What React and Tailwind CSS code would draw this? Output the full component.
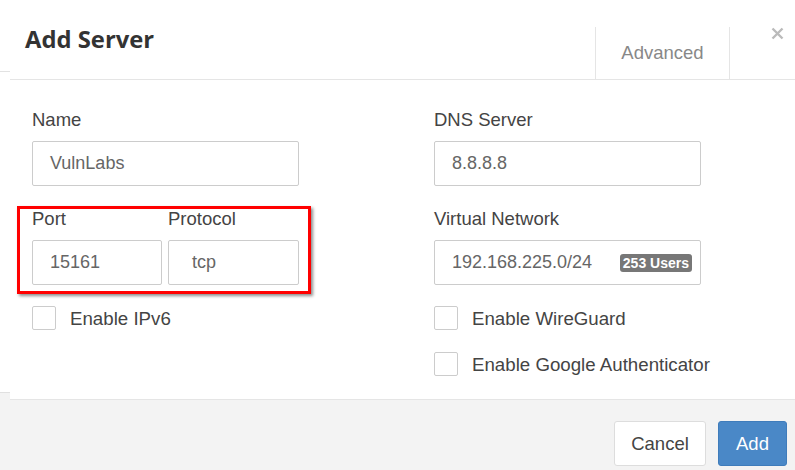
import React from 'react';

const sans = { fontFamily: '"Liberation Sans", Arial, sans-serif' };

function Field({ label, value, width = 'w-[267px]', pad = 'pl-[17px]', badge }) {
    return (
        <div className="flex flex-col">
            <label className="text-[18.5px] leading-[22px] text-[#444] mb-[10px] whitespace-nowrap">{label}</label>
            <div className={`${width} ${pad} h-[45px] border border-[#ccc] rounded-[2px] bg-white flex items-center pr-[8px]`}>
                <span className="text-[18px] text-[#666] flex-1 whitespace-nowrap">{value}</span>
                {badge && (
                    <span className="bg-[#777] text-white font-bold text-[14px] leading-[18px] px-[3px] rounded-[3px] whitespace-nowrap">{badge}</span>
                )}
            </div>
        </div>
    );
}

function Check({ label }) {
    return (
        <div className="flex items-center h-[24px]">
            <span className="w-[24px] h-[24px] shrink-0 border border-[#ccc] rounded-[2px] bg-white"></span>
            <span className="ml-[14px] pt-[3px] text-[18.7px] text-[#444] whitespace-nowrap">{label}</span>
        </div>
    );
}

export default function App() {
    return (
        <div className="w-[795px] h-[470px] overflow-hidden flex bg-white" style={sans}>
            {/* page behind the modal */}
            <div className="w-[10px] flex flex-col shrink-0">
                <div className="h-[71px]"></div>
                <div className="h-[1px] bg-[#e2e2e2]"></div>
                <div className="flex-1"></div>
                <div className="h-[78px] border-t border-[#e0e0e0] bg-[#f3f3f3]"></div>
            </div>

            {/* modal */}
            <div className="flex-1 flex flex-col relative">
                {/* Header */}
                <div className="h-[80px] border-b border-[#e5e5e5] flex items-end shrink-0">
                    <h4 className="self-center ml-[15px] text-[23.8px] font-bold text-[#333]" style={{ fontFamily: '"Open Sans", "Noto Sans", sans-serif' }}>
                        Add Server
                    </h4>
                    <div className="flex-1"></div>
                    <div className="w-[135px] h-[52px] border-l border-r border-[#e5e5e5] flex items-start justify-center pt-[12px] text-[18.5px] text-[#888]">
                        Advanced
                    </div>
                    <div className="w-[65px] h-[79px] flex justify-start pl-[41px] pt-[27px]">
                        <svg width="13" height="13" viewBox="0 0 13 13">
                            <path d="M1.5 1.5L11.5 11.5M11.5 1.5L1.5 11.5" stroke="#bbb" strokeWidth="2.4" />
                        </svg>
                    </div>
                </div>

                {/* Body */}
                <div className="grid grid-cols-[267px_267px] gap-x-[135px] pl-[22px] pt-[29px] pb-[23px]">
                    <div className="flex flex-col">
                        <Field label="Name" value="VulnLabs" />
                        <div className="flex gap-[6px] mt-[22px]">
                            <Field label="Port" value="15161" width="w-[130px]" />
                            <Field label="Protocol" value="tcp" width="w-[131px]" pad="pl-[23px]" />
                        </div>
                        <div className="mt-[21px]">
                            <Check label="Enable IPv6" />
                        </div>
                    </div>
                    <div className="flex flex-col">
                        <Field label="DNS Server" value="8.8.8.8" />
                        <div className="mt-[22px]">
                            <Field label="Virtual Network" value="192.168.225.0/24" badge="253 Users" />
                        </div>
                        <div className="mt-[21px] flex flex-col gap-[22px]">
                            <Check label="Enable WireGuard" />
                            <Check label="Enable Google Authenticator" />
                        </div>
                    </div>
                </div>

                {/* Footer */}
                <div className="flex-1 border-t border-[#e5e5e5] bg-[#f3f3f3] flex justify-end items-start pt-[21px] pr-[8px] gap-[12px]">
                    <button className="w-[92px] h-[45px] bg-white border border-[#ddd] rounded-[3px] text-[18.5px] text-[#444]">Cancel</button>
                    <button className="w-[69px] h-[45px] bg-[#4a88c7] border border-[#3f7cbb] rounded-[3px] text-[18.5px] text-white">Add</button>
                </div>

                {/* red annotation box */}
                <div className="absolute left-[7px] top-[206px] w-[294px] h-[88px] border-[3px] border-[#ff0000] shadow-[2px_2px_3px_rgba(0,0,0,0.45)] pointer-events-none"></div>
            </div>
        </div>
    );
}
